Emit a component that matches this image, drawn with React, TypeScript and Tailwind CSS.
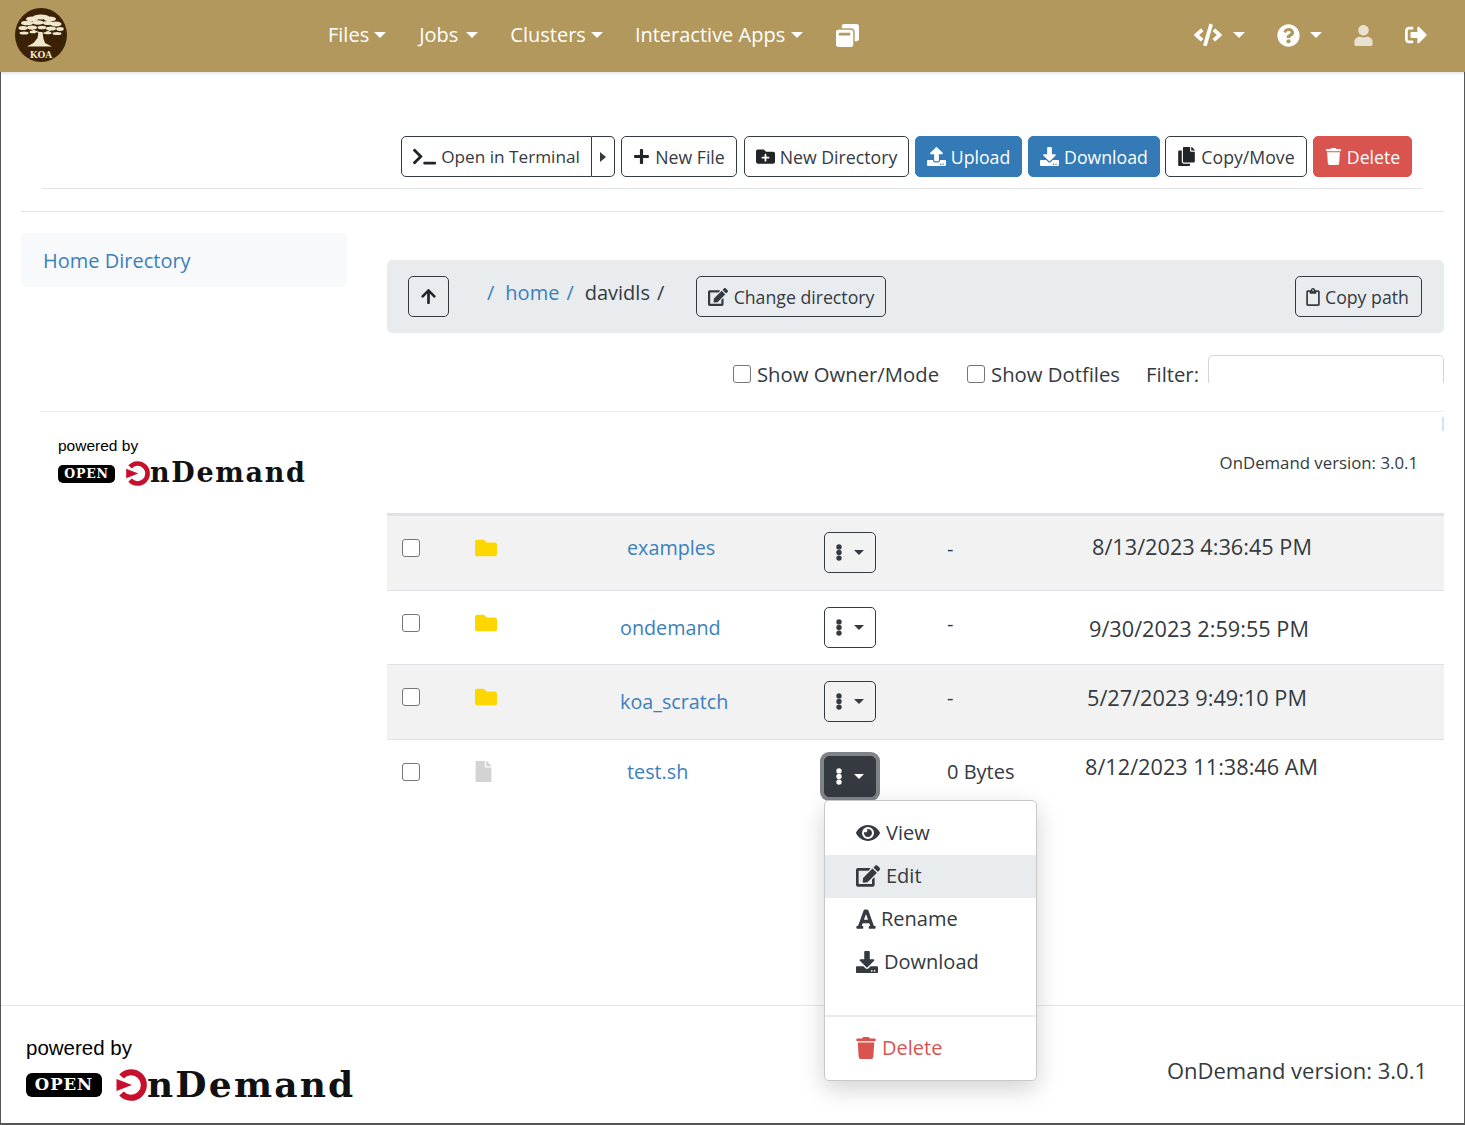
import {
  FaCode,
  FaCopy,
  FaDownload,
  FaEdit,
  FaEye,
  FaFile,
  FaFolder,
  FaFolderPlus,
  FaFont,
  FaArrowUp,
  FaPlus,
  FaQuestionCircle,
  FaRegClipboard,
  FaSignOutAlt,
  FaTerminal,
  FaTrash,
  FaUpload,
  FaUser,
  FaWindowRestore,
} from "react-icons/fa";
import type { ReactNode } from "react";

const Caret = ({ className = "border-x-[6px] border-t-[6px]" }: { className?: string }) => (
  <span className={`inline-block w-0 h-0 border-x-transparent border-t-current ${className}`} />
);

const Dots = () => (
  <svg viewBox="0 0 6 17" className="w-[6px] h-[17px] shrink-0" fill="currentColor">
    <circle cx="3" cy="2.9" r="2.7" />
    <circle cx="3" cy="8.5" r="2.7" />
    <circle cx="3" cy="14.1" r="2.7" />
  </svg>
);

const canopy = [
  [26, 9, 8, 2.6],
  [17, 11, 6, 2.4],
  [35, 11, 6, 2.4],
  [12, 15, 6, 2.3],
  [23, 14.5, 6, 2.2],
  [33, 15, 5, 2],
  [41, 16, 5.5, 2.4],
  [8, 20, 4.5, 2],
  [17, 19.5, 5, 2],
  [27, 19.5, 4.5, 1.8],
  [36, 20.5, 5, 2],
  [45, 21, 3.8, 1.9],
  [9, 25, 4.5, 1.5],
  [18, 24, 3.5, 1.3],
  [33, 25, 3.5, 1.3],
  [42, 25.5, 4.5, 1.5],
];

const KoaLogo = () => (
  <svg viewBox="0 0 52 54" className="w-[52px] h-[54px] shrink-0">
    <ellipse cx="26" cy="27" rx="26" ry="27" fill="#3b2106" />
    <g fill="#efe7cc">
      {canopy.map(([cx, cy, rx, ry]) => (
        <ellipse key={`${cx}-${cy}`} cx={cx} cy={cy} rx={rx} ry={ry} />
      ))}
      <path d="M23.5 24h4l.8 6 1.7 5 7 3.5H12l6.5-3.5 4-5z" />
      <path d="M24 25 16 22l1-.8 8 3zM28 25l7-3 .8.8-7 3.2z" />
    </g>
    <text
      x="26"
      y="49.5"
      textAnchor="middle"
      fill="#efe7cc"
      fontSize="9"
      fontWeight="700"
      fontFamily="'DejaVu Serif', serif"
    >
      KOA
    </text>
  </svg>
);

const OdMark = ({ size }: { size: number }) => (
  <svg viewBox="0 0 32 32" width={size} height={size} className="shrink-0">
    <path d="M6.5 7.5A12.8 12.8 0 1 1 6.5 24.5" fill="none" stroke="#c8102e" strokeWidth="6" />
    <path d="M1.5 10 17 16 1.5 22z" fill="#c8102e" />
  </svg>
);

const PoweredBy = ({ big = false }: { big?: boolean }) => (
  <div className="flex flex-col font-['Liberation_Sans',sans-serif] text-black">
    <span className={big ? "text-[20.5px] leading-[24px]" : "text-[15.5px] leading-[18px]"}>
      powered by
    </span>
    <div className={big ? "flex items-center mt-[9px]" : "flex items-center mt-[6px]"}>
      <span
        className={`flex items-center justify-center bg-black text-white font-bold font-['DejaVu_Serif',serif] ${
          big
            ? "w-[76px] h-[24px] rounded-[6px] text-[16.5px] tracking-[1px]"
            : "w-[57px] h-[18px] rounded-[5px] text-[12.5px] tracking-[0.8px]"
        }`}
      >
        OPEN
      </span>
      <span className={big ? "ml-[13px]" : "ml-[10px]"}>
        <OdMark size={big ? 32 : 25} />
      </span>
      <span
        className={`font-bold font-['DejaVu_Serif',serif] text-[#111] ${
          big
            ? "text-[36px] leading-[34px] tracking-[2.2px] -mt-[2px]"
            : "text-[27px] leading-[26px] tracking-[1.7px] -mt-[1px]"
        }`}
      >
        nDemand
      </span>
    </div>
  </div>
);

type BtnProps = {
  icon?: ReactNode;
  label?: string;
  tone?: "outline" | "blue" | "red";
  className?: string;
};

const Btn = ({ icon, label, tone = "outline", className = "" }: BtnProps) => {
  const toneClass =
    tone === "blue"
      ? "bg-[#337ab7] border-[#337ab7] text-white"
      : tone === "red"
        ? "bg-[#d9534f] border-[#d9534f] text-white"
        : "border-[#343a40] text-[#343a40]";
  return (
    <button
      className={`flex items-center justify-center gap-[5px] h-[41px] border rounded-[5px] text-[17.7px] ${toneClass} ${className}`}
    >
      {icon}
      {label && <span>{label}</span>}
    </button>
  );
};

const NavItem = ({ label, className }: { label: string; className: string }) => (
  <a className={`flex items-center ${className}`}>
    {label}
    <Caret />
  </a>
);

const rows = [
  {
    name: "examples",
    size: "-",
    date: "8/13/2023 4:36:45 PM",
    bg: "bg-[#f2f2f2]",
    nameClass: "pl-[7px] mt-[18px]",
    sizeClass: "mt-[19px]",
    dateClass: "ml-[5px] mt-[17px]",
  },
  {
    name: "ondemand",
    size: "-",
    date: "9/30/2023 2:59:55 PM",
    bg: "bg-white",
    nameClass: "mt-[23px]",
    sizeClass: "mt-[19px]",
    dateClass: "ml-[2px] mt-[24px]",
  },
  {
    name: "koa_scratch",
    size: "-",
    date: "5/27/2023 9:49:10 PM",
    bg: "bg-[#f2f2f2]",
    nameClass: "mt-[23px]",
    sizeClass: "mt-[19px]",
    dateClass: "mt-[19px]",
  },
  {
    name: "test.sh",
    size: "0 Bytes",
    date: "8/12/2023 11:38:46 AM",
    bg: "bg-white",
    nameClass: "pl-[7px] mt-[18px]",
    sizeClass: "mt-[18px]",
    dateClass: "-ml-[2px] mt-[13px]",
  },
];

const menu = [
  { icon: <FaEye className="text-[24px]" />, label: "View", gap: "gap-[6px]", bg: "" },
  { icon: <FaEdit className="text-[24px]" />, label: "Edit", gap: "gap-[6px]", bg: "bg-[#e9ecef]" },
  { icon: <FaFont className="text-[22px] -ml-[1px]" />, label: "Rename", gap: "gap-[4px]", bg: "" },
  { icon: <FaDownload className="text-[22px]" />, label: "Download", gap: "gap-[6px]", bg: "" },
];

const Checkbox = ({ className = "" }: { className?: string }) => (
  <input
    type="checkbox"
    readOnly
    className={`appearance-none block w-[18px] h-[18px] shrink-0 bg-white border border-[#767676] rounded-[3px] ${className}`}
  />
);

export default function App() {
  return (
    <div className="flex flex-col w-[1465px] h-[1125px] overflow-hidden bg-white text-[#343a40] font-['Open_Sans',sans-serif] text-[20px] leading-[28px]">
      <nav className="flex items-center h-[72px] pb-[2px] shrink-0 bg-[#b2985c] text-white relative z-10 shadow-[0_1px_3px_rgba(0,0,0,0.15)]">
        <div className="ml-[15px]">
          <KoaLogo />
        </div>
        <NavItem label="Files" className="ml-[261px] gap-[5px]" />
        <NavItem label="Jobs" className="ml-[33px] gap-[8px]" />
        <NavItem label="Clusters" className="ml-[32px] gap-[5px]" />
        <NavItem label="Interactive Apps" className="ml-[32px] gap-[6px]" />
        <FaWindowRestore className="ml-[33px] text-[23px]" />
        <div className="flex items-center ml-auto mr-[38px]">
          <FaCode className="text-[28px]" />
          <Caret className="ml-[11px] border-x-[6px] border-t-[6px]" />
          <FaQuestionCircle className="ml-[32px] text-[23px]" />
          <Caret className="ml-[10px] border-x-[6px] border-t-[6px]" />
          <FaUser className="ml-[31px] text-[21px] text-[#e8e1cf]" />
          <FaSignOutAlt className="ml-[31px] text-[22px]" />
        </div>
      </nav>

      <main className="flex flex-col flex-1 border-x border-b-2 border-[#555]">
        <div className="flex justify-end mt-[64px] mr-[52px]">
          <div className="flex">
            <Btn
              icon={<FaTerminal className="text-[23px] text-[#212529]" />}
              label="Open in Terminal"
              className="w-[191px] rounded-r-none !text-[17.2px]"
            />
            <button className="flex items-center justify-center w-[23px] h-[41px] border border-l-0 border-[#343a40] rounded-r-[5px] text-[#343a40]">
              <span className="w-0 h-0 border-y-[5px] border-l-[6px] border-y-transparent border-l-current" />
            </button>
          </div>
          <Btn icon={<FaPlus className="text-[17px] text-[#212529]" />} label="New File" className="w-[116px] ml-[6px]" />
          <Btn icon={<FaFolderPlus className="text-[19px] text-[#212529]" />} label="New Directory" className="w-[165px] ml-[7px]" />
          <Btn icon={<FaUpload className="text-[19px]" />} label="Upload" tone="blue" className="w-[107px] ml-[6px]" />
          <Btn icon={<FaDownload className="text-[19px]" />} label="Download" tone="blue" className="w-[132px] ml-[6px]" />
          <Btn icon={<FaCopy className="text-[19px] text-[#212529]" />} label="Copy/Move" className="w-[142px] ml-[5px]" />
          <Btn icon={<FaTrash className="text-[17px]" />} label="Delete" tone="red" className="w-[99px] ml-[6px]" />
        </div>
        <hr className="mt-[11px] ml-[41px] mr-[42px] border-[#dee2e6]" />
        <hr className="mt-[22px] ml-[20px] mr-[20px] border-[#e5e5e5]" />

        <div className="flex mt-[21px] ml-[20px] mr-[20px]">
          <div className="flex items-center w-[326px] h-[54px] px-[22px] pt-[2px] rounded-[5px] bg-[#f8f9fa] text-[#3b80bd]">
            Home Directory
          </div>
          <div className="flex flex-col flex-1 ml-[40px] pt-[27px]">
            <div className="flex items-center h-[73px] pl-[21px] pr-[22px] rounded-[5px] bg-[#e9ecef]">
              <Btn icon={<FaArrowUp className="text-[17px] text-[#212529]" />} className="w-[41px]" />
              <div className="flex items-center ml-[38px] w-[209px] -mt-[8px] whitespace-nowrap">
                <span className="text-[#3b80bd]">/</span>
                <span className="ml-[11px] text-[#3b80bd]">home</span>
                <span className="ml-[7px] text-[#3b80bd]">/</span>
                <span className="ml-[11px]">davidls</span>
                <span className="ml-[7px]">/</span>
              </div>
              <Btn icon={<FaEdit className="text-[20px]" />} label="Change directory" className="w-[190px] gap-[6px]" />
              <Btn
                icon={<FaRegClipboard className="text-[18px]" />}
                label="Copy path"
                className="w-[127px] ml-auto !justify-start pl-[8px] !gap-[3px]"
              />
            </div>
            <div className="flex items-end justify-end h-[28px] mt-[22px] text-[20.3px]">
              <label className="flex items-center gap-[6px] mb-[-5px]">
                <Checkbox />
                Show Owner/Mode
              </label>
              <label className="flex items-center gap-[6px] ml-[28px] mb-[-5px]">
                <Checkbox />
                Show Dotfiles
              </label>
              <span className="ml-[26px] mb-[-5px]">Filter:</span>
              <div className="w-[236px] h-[28px] ml-[9px] border border-b-0 border-[#ced4da] rounded-t-[5px]" />
            </div>
          </div>
        </div>

        <section className="relative flex justify-between h-[102px] mt-[28px] ml-[39px] mr-[20px] border-t border-[#eeeeee]">
          <div className="ml-[18px] mt-[25px]">
            <PoweredBy />
          </div>
          <span className="mt-[37px] mr-[26px] text-[16.8px] leading-[28px]">OnDemand version: 3.0.1</span>
          <span className="absolute right-0 top-[5px] w-[2px] h-[14px] bg-[#cfe4f7]" />
        </section>

        <div className="ml-[386px] mr-[20px] border-t-[3px] border-[#dee2e6]">
          {rows.map((row, i) => {
            const active = i === rows.length - 1;
            return (
              <div
                key={row.name}
                className={`flex items-start h-[74.5px] ${row.bg} ${active ? "" : "border-b border-[#dee2e6]"}`}
              >
                <div className="w-[88px] pl-[15px] pt-[23px]">
                  <Checkbox />
                </div>
                <div className="w-[145px] pt-[21px]">
                  {row.size === "-" ? (
                    <FaFolder className="text-[22px] text-[#ffd700]" />
                  ) : (
                    <FaFile className="text-[21px] text-[#d3d3d3] -ml-[2px]" />
                  )}
                </div>
                <div className={`w-[204px] text-[#3b80bd] text-[19.75px] ${row.nameClass}`}>{row.name}</div>
                <div className="relative w-[123px] pt-[16px]">
                  <button
                    className={`flex items-center pl-[11px] gap-[12px] w-[52px] h-[41px] border rounded-[5px] ${
                      active
                        ? "bg-[#343a40] border-[#343a40] text-white ring-[4px] ring-[#7f8488]"
                        : "border-[#343a40] text-[#343a40]"
                    }`}
                  >
                    <Dots />
                    <Caret className="border-x-[5px] border-t-[5px]" />
                  </button>
                  {active && (
                    <div className="absolute left-0 top-[60px] z-20 w-[213px] h-[281px] pt-[11px] bg-white border border-[#c9c9c9] rounded-[5px] shadow-[0_8px_24px_rgba(0,0,0,0.18)]">
                      {menu.map((item) => (
                        <div
                          key={item.label}
                          className={`flex items-center h-[43px] pl-[31px] ${item.gap} ${item.bg}`}
                        >
                          {item.icon}
                          {item.label}
                        </div>
                      ))}
                      <hr className="mt-[31px] border-[#e9ecef] border-t-2" />
                      <div className="flex items-center gap-[5px] h-[43px] mt-[10px] pl-[31px] text-[#d9534f]">
                        <FaTrash className="text-[22px] -ml-[1px]" />
                        Delete
                      </div>
                    </div>
                  )}
                </div>
                <div className={`w-[140px] ${row.sizeClass}`}>{row.size}</div>
                <div className={`whitespace-nowrap text-[21.7px] ${row.dateClass}`}>{row.date}</div>
              </div>
            );
          })}
        </div>

        <footer className="flex justify-between mt-auto h-[118px] border-t border-[#e5e5e5]">
          <div className="ml-[25px] mt-[30px]">
            <PoweredBy big />
          </div>
          <span className="mt-[49px] mr-[37px] text-[22px] leading-[30px]">OnDemand version: 3.0.1</span>
        </footer>
      </main>
    </div>
  );
}
